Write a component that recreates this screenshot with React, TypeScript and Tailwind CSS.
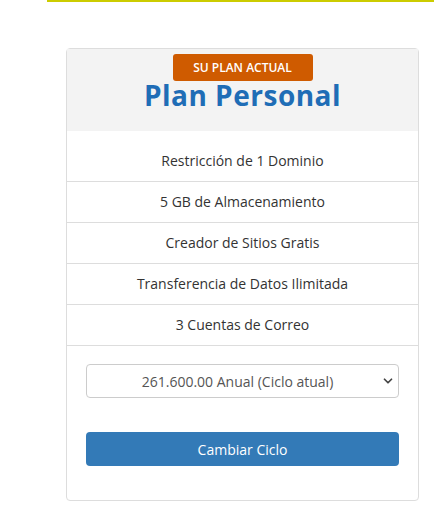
import { ChevronDown } from 'lucide-react';

const features = [
  'Restricción de 1 Dominio',
  '5 GB de Almacenamiento',
  'Creador de Sitios Gratis',
  'Transferencia de Datos Ilimitada',
  '3 Cuentas de Correo',
];

export default function App() {
  return (
    <div className="min-h-[516px] bg-white font-['Open_Sans',sans-serif] text-[#333]">
      {/* top accent line */}
      <div className="ml-[47px] h-[2px] bg-[#cccc00]" />

      <div className="ml-[66px] mt-[46px] w-[353px] rounded-[4px] border border-[#ddd] bg-white">
        {/* header */}
        <div className="flex h-[82px] flex-col items-center bg-[#f3f3f3] pt-[5px]">
          <div className="flex h-[27px] w-[140px] items-center justify-center rounded-[3px] bg-[#cf5b00] text-[12px] font-semibold text-white">
            SU PLAN ACTUAL
          </div>
          <div className="mt-[-4px] text-[28px] leading-[36px] font-bold tracking-[0.5px] text-[#1f6db6]">
            Plan Personal
          </div>
        </div>

        {/* features */}
        <ul>
          {features.map((f, i) => (
            <li
              key={f}
              className={`border-b border-[#ddd] pb-[10px] text-center text-[14px] leading-[20px] ${i === 0 ? 'pt-[20px]' : 'pt-[10px]'}`}
            >
              {f}
            </li>
          ))}
        </ul>

        {/* footer */}
        <div className="px-[19px] pt-[18px] pb-[34px]">
          <div className="relative">
            <select className="h-[34px] w-full appearance-none rounded-[4px] border border-[#ccc] bg-white pr-[10px] text-center text-[14px] text-[#555]">
              <option>261.600.00 Anual (Ciclo atual)</option>
            </select>
            <ChevronDown className="pointer-events-none absolute top-[10px] right-[4px] h-[14px] w-[14px] text-[#444]" strokeWidth={3} />
          </div>
          <button className="mt-[34px] h-[34px] w-full rounded-[4px] bg-[#337ab7] text-[14px] text-white">
            Cambiar Ciclo
          </button>
        </div>
      </div>
    </div>
  );
}
